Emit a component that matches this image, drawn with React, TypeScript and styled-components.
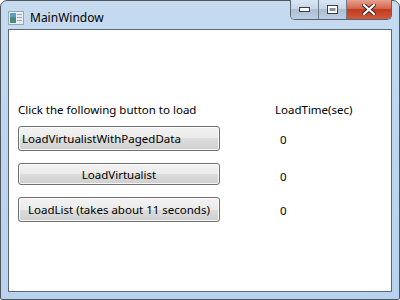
import React from 'react'
import styled, { createGlobalStyle } from 'styled-components'

const GlobalStyle = createGlobalStyle`
  html, body {
    margin: 0;
    padding: 0;
    background: #ffffff;
  }
  body {
    font-family: 'Noto Sans', 'Open Sans', 'DejaVu Sans', sans-serif;
  }
`

interface RowData {
  label: string
  time: number
  align: 'left' | 'center'
  height: number
}

const rows: RowData[] = [
  { label: 'LoadVirtualistWithPagedData', time: 0, align: 'left', height: 25 },
  { label: 'LoadVirtualist', time: 0, align: 'center', height: 22 },
  { label: 'LoadList (takes about 11 seconds)', time: 0, align: 'center', height: 25 },
]

export default function App() {
  return (
    <>
      <GlobalStyle />
      <Frame>
        <TitleBar>
          <TitleLeft>
            <AppIcon>
              <svg width="16" height="14" viewBox="0 0 16 14">
                <rect x="0.5" y="0.5" width="15" height="13" fill="#e8eef3" stroke="#9aa8b4" />
                <rect x="2" y="2" width="6" height="10" fill="#4a8a7a" />
                <rect x="2" y="2" width="6" height="4" fill="#5f9fc0" />
                <rect x="9" y="3" width="5" height="1" fill="#9aa8b4" />
                <rect x="9" y="6" width="5" height="1" fill="#9aa8b4" />
                <rect x="9" y="9" width="5" height="1" fill="#9aa8b4" />
              </svg>
            </AppIcon>
            <Title>MainWindow</Title>
          </TitleLeft>
          <CaptionButtons>
            <CaptionButton $w={27}>
              <svg width="11" height="5" viewBox="0 0 11 5">
                <rect x="0.5" y="0.5" width="10" height="4" fill="#fff" stroke="#3a3f46" />
              </svg>
            </CaptionButton>
            <CaptionButton $w={27}>
              <svg width="11" height="9" viewBox="0 0 11 9">
                <rect x="0.5" y="0.5" width="10" height="8" fill="#fff" stroke="#3a3f46" />
                <rect x="2.5" y="3" width="6" height="3" fill="#8a929c" />
              </svg>
            </CaptionButton>
            <CloseButton>
              <svg width="14" height="11" viewBox="0 0 14 11">
                <path d="M2 1 L12 10 M12 1 L2 10" stroke="#3b2020" strokeWidth="4" strokeLinecap="square" />
                <path d="M2 1 L12 10 M12 1 L2 10" stroke="#ffffff" strokeWidth="2.2" strokeLinecap="square" />
              </svg>
            </CloseButton>
          </CaptionButtons>
        </TitleBar>
        <Client>
          <Grid>
            <Label>Click the following button to load</Label>
            <HeaderLabel>LoadTime(sec)</HeaderLabel>
            {rows.map((r) => (
              <React.Fragment key={r.label}>
                <LoadButton $align={r.align} $h={r.height}>{r.label}</LoadButton>
                <TimeValue>{r.time}</TimeValue>
              </React.Fragment>
            ))}
          </Grid>
        </Client>
      </Frame>
    </>
  )
}

const Frame = styled.div`
  width: 400px;
  height: 300px;
  box-sizing: border-box;
  display: flex;
  flex-direction: column;
  padding: 0 7px 7px 7px;
  border: 1px solid #4f5660;
  border-radius: 7px 7px 2px 2px;
  background: linear-gradient(180deg, #c6dbf0 0%, #bed6ee 40%, #b9d3ee 100%);
`

const TitleBar = styled.div`
  height: 28px;
  display: flex;
  align-items: flex-start;
  justify-content: space-between;
`

const TitleLeft = styled.div`
  display: flex;
  align-items: center;
  gap: 6px;
  padding-top: 8px;
`

const AppIcon = styled.div`
  display: flex;
  width: 16px;
  height: 14px;
`

const Title = styled.span`
  font-family: 'Noto Sans', 'Open Sans', sans-serif;
  font-size: 12px;
  color: #000;
`

const CaptionButtons = styled.div`
  display: flex;
  margin-top: -1px;
  border: 1px solid #5a6470;
  border-top: none;
  border-radius: 0 0 5px 5px;
  overflow: hidden;
  height: 19px;
`

const CaptionButton = styled.div<{ $w: number }>`
  width: ${(p) => p.$w}px;
  display: flex;
  align-items: center;
  justify-content: center;
  border-right: 1px solid #6e7a88;
  background: linear-gradient(180deg, #d9e6f3 0%, #c6d7ea 45%, #aebfd4 50%, #bccde2 100%);
`

const CloseButton = styled.div`
  width: 44px;
  display: flex;
  align-items: center;
  justify-content: center;
  background: linear-gradient(180deg, #e8a08e 0%, #d2654d 45%, #c23b1e 50%, #cf5a3c 100%);
`

const Client = styled.div`
  flex: 1;
  background: #ffffff;
  border: 1px solid #5b6877;
  box-sizing: border-box;
`

const Grid = styled.div`
  display: grid;
  grid-template-columns: 202px 1fr;
  column-gap: 55px;
  padding: 72px 0 0 9px;
  font-size: 11.5px;
`

const Label = styled.div`
  line-height: 16px;
  color: #000;
  height: 24px;
`

const HeaderLabel = styled.div`
  line-height: 16px;
  color: #000;
`

const LoadButton = styled.div<{ $align: 'left' | 'center'; $h: number }>`
  height: ${(p) => p.$h}px;
  box-sizing: border-box;
  border: 1px solid #707070;
  border-radius: 3px;
  background: linear-gradient(180deg, #f2f2f2 0%, #ebebeb 50%, #dddddd 50%, #cfcfcf 100%);
  box-shadow: inset 0 0 0 1px rgba(255, 255, 255, 0.8);
  color: #000;
  display: flex;
  align-items: center;
  justify-content: ${(p) => (p.$align === 'left' ? 'flex-start' : 'center')};
  padding: 0 3px;
  margin-bottom: 12px;
  white-space: nowrap;
`

const TimeValue = styled.div`
  color: #000;
  padding-left: 5px;
  padding-top: 6px;
`
